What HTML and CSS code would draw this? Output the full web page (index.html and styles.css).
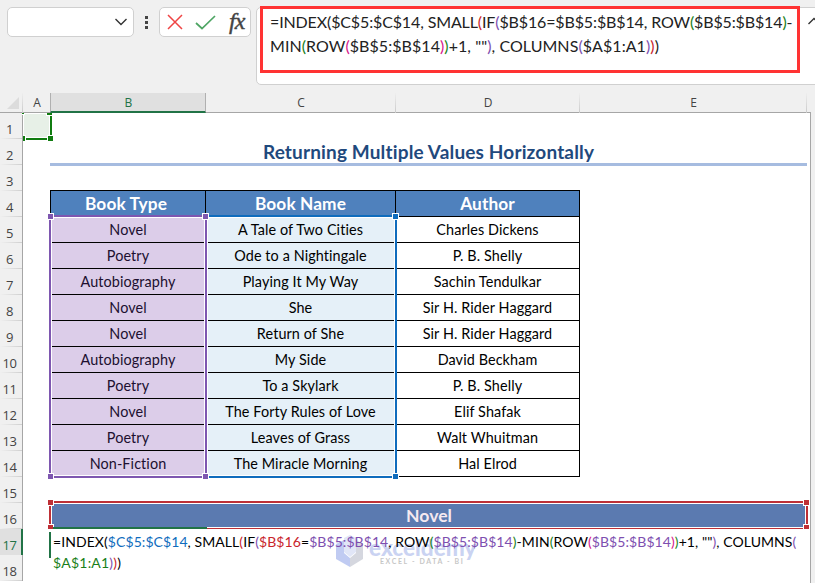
FILE: index.html
```html
<!DOCTYPE html>
<html lang="en">
<head>
    <meta charset="UTF-8">
    <meta name="viewport" content="width=device-width, initial-scale=1.0">
    <title>Returning Multiple Values Horizontally</title>
    <link rel="stylesheet" href="styles.css">
</head>
<body>
    <div class="toolbar">
        <div class="name-box">
            <svg width="14" height="8" viewBox="0 0 14 8"><path d="M1.5 1l5.5 5.5L12.500 1" fill="none" stroke="#333" stroke-width="1.400"/></svg>
        </div>
        <div class="dots"><i></i><i></i><i></i></div>
        <div class="fx-box">
            <svg class="cancel" width="16" height="16" viewBox="0 0 16 16"><path d="M1 1l14 14M15 1L1 15" fill="none" stroke="#ef4444" stroke-width="1.500"/></svg>
            <svg class="enter" width="21" height="15" viewBox="0 0 21 15"><path d="M1 8l6 5.500L20 1" fill="none" stroke="#4ea564" stroke-width="1.700"/></svg>
            <span class="fx">fx</span>
        </div>
        <div class="formula-bar">
            <div class="formula-highlight">
                <div class="f-line f-line1">=INDEX($C$5:$C$14, SMALL<b class="red">(</b>IF<b class="purple">(</b>$B$16=$B$5:$B$14, ROW<b class="green">(</b>$B$5:$B$14<b class="green">)</b>-</div>
                <div class="f-line f-line2">MIN<b class="green">(</b>ROW<b class="pink">(</b>$B$5:$B$14<b class="pink">)</b><b class="green">)</b>+1, ""<b class="purple">)</b>, COLUMNS<b class="purple">(</b>$A$1:A1<b class="purple">)</b><b class="red">)</b>)</div>
            </div>
            <svg class="collapse" width="14" height="8" viewBox="0 0 14 8"><path d="M1.500 7L7 1.500 12.500 7" fill="none" stroke="#333" stroke-width="1.400"/></svg>
        </div>
    </div>

    <div class="columns">
        <div class="corner"><svg width="12" height="12" viewBox="0 0 12 12"><path d="M12 0v12H0z" fill="#dcdcdc"/></svg></div>
        <div>A</div>
        <div class="active">B</div>
        <div>C</div>
        <div>D</div>
        <div>E</div>
    </div>

    <div class="sheet">
        <div class="row"><div class="num low">1</div></div>
        <div class="row"><div class="num">2</div><div></div><div class="title">Returning Multiple Values Horizontally</div></div>
        <div class="row"><div class="num">3</div></div>
        <div class="row head"><div class="num">4</div><div></div><div class="cell type">Book Type</div><div class="cell">Book Name</div><div class="cell">Author</div></div>
        <div class="row"><div class="num">5</div><div></div><div class="cell type">Novel</div><div class="cell name">A Tale of Two Cities</div><div class="cell">Charles Dickens</div></div>
        <div class="row"><div class="num">6</div><div></div><div class="cell type">Poetry</div><div class="cell name">Ode to a Nightingale</div><div class="cell">P. B. Shelly</div></div>
        <div class="row"><div class="num">7</div><div></div><div class="cell type">Autobiography</div><div class="cell name">Playing It My Way</div><div class="cell">Sachin Tendulkar</div></div>
        <div class="row"><div class="num">8</div><div></div><div class="cell type">Novel</div><div class="cell name">She</div><div class="cell">Sir H. Rider Haggard</div></div>
        <div class="row"><div class="num">9</div><div></div><div class="cell type">Novel</div><div class="cell name">Return of She</div><div class="cell">Sir H. Rider Haggard</div></div>
        <div class="row"><div class="num">10</div><div></div><div class="cell type">Autobiography</div><div class="cell name">My Side</div><div class="cell">David Beckham</div></div>
        <div class="row"><div class="num">11</div><div></div><div class="cell type">Poetry</div><div class="cell name">To a Skylark</div><div class="cell">P. B. Shelly</div></div>
        <div class="row"><div class="num">12</div><div></div><div class="cell type">Novel</div><div class="cell name">The Forty Rules of Love</div><div class="cell">Elif Shafak</div></div>
        <div class="row"><div class="num">13</div><div></div><div class="cell type">Poetry</div><div class="cell name">Leaves of Grass</div><div class="cell">Walt Whuitman</div></div>
        <div class="row"><div class="num">14</div><div></div><div class="cell type">Non-Fiction</div><div class="cell name">The Miracle Morning</div><div class="cell">Hal Elrod</div></div>
        <div class="row"><div class="num low">15</div></div>
        <div class="row"><div class="num low">16</div><div></div><div class="result">Novel</div></div>
        <div class="row">
            <div class="num low active">17</div><div></div>
            <div class="editor">
                <div class="e-line e-line1">=INDEX(<b class="blue">$C$5:$C$14</b>, SMALL<b class="red">(</b>IF<b class="purple">(</b><b class="red">$B$16</b>=<b class="purple">$B$5:$B$14</b>, ROW<b class="green">(</b><b class="purple">$B$5:$B$14</b><b class="green">)</b>-MIN<b class="green">(</b>ROW<b class="pink">(</b><b class="purple">$B$5:$B$14</b><b class="pink">)</b><b class="green">)</b>+1, ""<b class="purple">)</b>, COLUMNS<b class="purple">(</b></div>
                <div class="e-line e-line2"><b class="green">$A$1:A1</b><b class="purple">)</b><b class="red">)</b>)</div>
            </div>
        </div>
        <div class="row"><div class="num low">18</div></div>

        <!-- Range outlines -->
        <div class="range range-a1"><i class="tl"></i><i class="tr"></i><i class="bl"></i><i class="br"></i></div>
        <div class="range range-c"><i class="tr"></i><i class="br"></i></div>
        <div class="range range-b"><i class="tl"></i><i class="tr"></i><i class="bl"></i><i class="br"></i></div>
        <div class="range range-16"><i class="tl"></i><i class="tr"></i><i class="bl"></i><i class="br"></i></div>
        <div class="edit-top"></div>

        <div class="watermark">
            <svg width="28" height="32" viewBox="0 0 28 32">
                <path d="M0 9l8-4v13l6 5v9L0 24z" fill="#8da2e8"/>
                <path d="M14 0l6 3v14l-6 5-6-5V3z" fill="#c9d3f2"/>
                <path d="M20 5l7 4v15l-13 8v-9l6-5z" fill="#b3b8c6"/>
            </svg>
            <div>
                <div class="brand">exceldemy</div>
                <div class="tagline">EXCEL - DATA - BI</div>
            </div>
        </div>
    </div>
</body>
</html>
```
FILE: styles.css
```css
/* General */
* {
    box-sizing: border-box;
}

body {
    margin: 0;
    width: 815px;
    height: 583px;
    overflow: hidden;
    background: #f0f0f0;
    font-family: Lato, 'Liberation Sans', sans-serif;
    font-variant-ligatures: none;
    color: #000;
}

b {
    font-weight: normal;
}

.red { color: #c9252c; }
.purple { color: #7e4fb0; }
.green { color: #1a7f1a; }
.pink { color: #d6168b; }
.blue { color: #0f6cbd; }

/* Formula bar */
.toolbar {
    display: flex;
    align-items: flex-start;
    height: 93px;
    padding: 7px 0 0 7px;
}

.name-box,
.fx-box {
    display: flex;
    align-items: center;
    height: 30px;
    background: #fff;
    border: 1px solid #d0d0d0;
    border-radius: 5px;
}

.name-box {
    width: 127px;
    justify-content: flex-end;
    padding-right: 5px;
}

.dots {
    display: flex;
    flex-direction: column;
    gap: 2px;
    width: 3px;
    margin: 9px 10px 0 11px;
}

.dots i {
    width: 3px;
    height: 3px;
    background: #444;
}

.fx-box {
    width: 92px;
    margin-left: 1px;
    padding-left: 7px;
}

.enter {
    margin-left: 12px;
}

.fx {
    margin: -2px 0 0 13px;
    font: italic 24px/28px 'Liberation Serif', serif;
    -webkit-text-stroke: 0.4px #444;
    color: #444;
    letter-spacing: -1px;
}

.formula-bar {
    display: flex;
    flex: 1;
    height: 78px;
    margin: 0 -20px 0 5px;
    background: #fff;
    border: 1px solid #d0d0d0;
    border-radius: 5px;
}

.formula-highlight {
    flex: none;
    width: 540px;
    height: 67px;
    margin: -2px 0 0 3px;
    padding: 1px 0 0 7px;
    border: 3px solid #ff3333;
}

.collapse {
    flex: none;
    margin: 9px 0 0 7px;
}

.f-line {
    font-size: 16px;
    line-height: 24px;
    white-space: pre;
    color: #222;
}

.f-line1 { letter-spacing: -0.13px; }
.f-line2 { letter-spacing: 0.06px; }

/* Column letters */
.columns,
.row {
    display: grid;
    grid-template-columns: 23px 28px 155px 190px 184px 227px;
}

.columns {
    width: 811px;
    height: 20px;
    border-bottom: 1px solid #a6a6a6;
    font: 12px/19px 'Open Sans', sans-serif;
    color: #444;
    text-align: center;
}

.columns div {
    padding-left: 1px;
    border-right: 1px solid;
    border-image: linear-gradient(#f0f0f0, #c8c8c8) 1;
}

.columns .active {
    height: 20px;
    margin-left: -1px;
    background: #e0e0e0;
    border-image: none;
    border-right: 1px solid #b0b0b0;
    border-left: 1px solid #b0b0b0;
    border-bottom: 2px solid #217346;
    color: #217346;
}

.columns .corner {
    display: flex;
    padding: 4px 0 0 7px;
}

/* Sheet */
.sheet {
    position: relative;
    width: 811px;
    height: 470px;
    background: #fff;
    border-right: 1px solid #a6a6a6;
}

.row {
    height: 26px;
}

.num {
    height: 26px;
    padding: 6px 3px 0 0;
    background: linear-gradient(to right, #f0f0f0, #cfcfcf) bottom / 100% 1px no-repeat #f0f0f0;
    border-right: 1px solid #a6a6a6;
    font: 13px/20px 'Open Sans', sans-serif;
    letter-spacing: -0.5px;
    color: #444;
    text-align: center;
}

.num.low {
    padding-top: 7px;
    line-height: 19px;
}

.num.active {
    padding-right: 2px;
    background: #e0e0e0;
    border-right: 2px solid #217346;
    color: #217346;
}

.title {
    grid-column: 3 / 7;
    height: 27px;
    margin-left: -1px;
    border-bottom: 3px solid #a6bce0;
    font-size: 19px;
    font-weight: bold;
    line-height: 25px;
    letter-spacing: 0.15px;
    color: #1f497d;
    text-align: center;
}

.cell {
    height: 26px;
    border-right: 1px solid #000;
    border-bottom: 1px solid #000;
    font-size: 14.4px;
    line-height: 26px;
    letter-spacing: 0.1px;
    text-align: center;
}

.type {
    margin-left: -1px;
    border-left: 1px solid #000;
    background: #dccde9;
    color: #201030;
}

.name {
    background: #e5f0f8;
}

.head .cell {
    height: 27px;
    margin-top: -1px;
    border-top: 1px solid #000;
    background: #4f81bd;
    font-size: 17.3px;
    font-weight: bold;
    line-height: 25px;
    color: #fff;
}

.head .type {
    padding-right: 4px;
}

.result {
    grid-column: 3 / 7;
    background: #5b7ab0;
    font-size: 17.6px;
    font-weight: bold;
    line-height: 25px;
    color: #f5e9f0;
    text-align: center;
}

.editor {
    z-index: 1;
    grid-column: 3 / 7;
    height: 26px;
    margin: 3px 0 0 -2px;
    border-left: 2px solid #217346;
    padding-left: 2px;
}

.e-line {
    position: relative;
    top: -1px;
    font-size: 14px;
    line-height: 21px;
    white-space: pre;
}

.e-line1 { letter-spacing: 0.075px; }
.e-line2 { letter-spacing: 0.2px; }

/* Range outlines lie over the cells */
.range {
    position: absolute;
    border: 2px solid;
    box-shadow: inset 0 0 0 1px #fff;
}

.range i {
    position: absolute;
    width: 7px;
    height: 7px;
    background: currentColor;
    border: 1px solid #fff;
}

.range .tl { left: -4px; top: -4px; }
.range .tr { right: -4px; top: -4px; }
.range .bl { left: -4px; bottom: -4px; }
.range .br { right: -4px; bottom: -4px; }

.range-a1 {
    left: 23px;
    top: 0;
    width: 29px;
    height: 27px;
    border-width: 0 2px 2px 0;
    background: #e7f0e7;
    color: #107c10;
}

.range-a1 .tl { left: -1px; top: 0; width: 3px; height: 2px; border-width: 0 1px 1px 0; }
.range-a1 .tr { top: 0; width: 6px; height: 3px; border-width: 0 0 1px 1px; right: -2px; }
.range-a1 .bl { left: 0; width: 3px; border-left: 0; }

.range-b {
    left: 49px;
    top: 102px;
    width: 158px;
    height: 263px;
    color: #7e57b0;
}

.range-c {
    left: 205px;
    top: 102px;
    width: 192px;
    height: 263px;
    color: #0f6cbd;
}

.range-16 {
    left: 49px;
    top: 388px;
    width: 759px;
    height: 28px;
    border-bottom-width: 1px;
    color: #be3036;
}

.range-16 .bl,
.range-16 .br {
    bottom: -1px;
    height: 5px;
    border-bottom: 0;
}

.edit-top {
    position: absolute;
    left: 53px;
    top: 414px;
    width: 154px;
    height: 2px;
    background: #217346;
}

.watermark {
    position: absolute;
    left: 336px;
    top: 422px;
    display: flex;
    gap: 5px;
    opacity: 0.55;
}

.brand {
    font-size: 22.5px;
    font-weight: 900;
    line-height: 22px;
    margin-top: 2px;
    color: #9fb0e8;
}

.tagline {
    margin: -2px 0 0 11px;
    font-size: 7px;
    font-weight: bold;
    line-height: 9px;
    letter-spacing: 1.6px;
    color: #999;
    white-space: nowrap;
}
```
